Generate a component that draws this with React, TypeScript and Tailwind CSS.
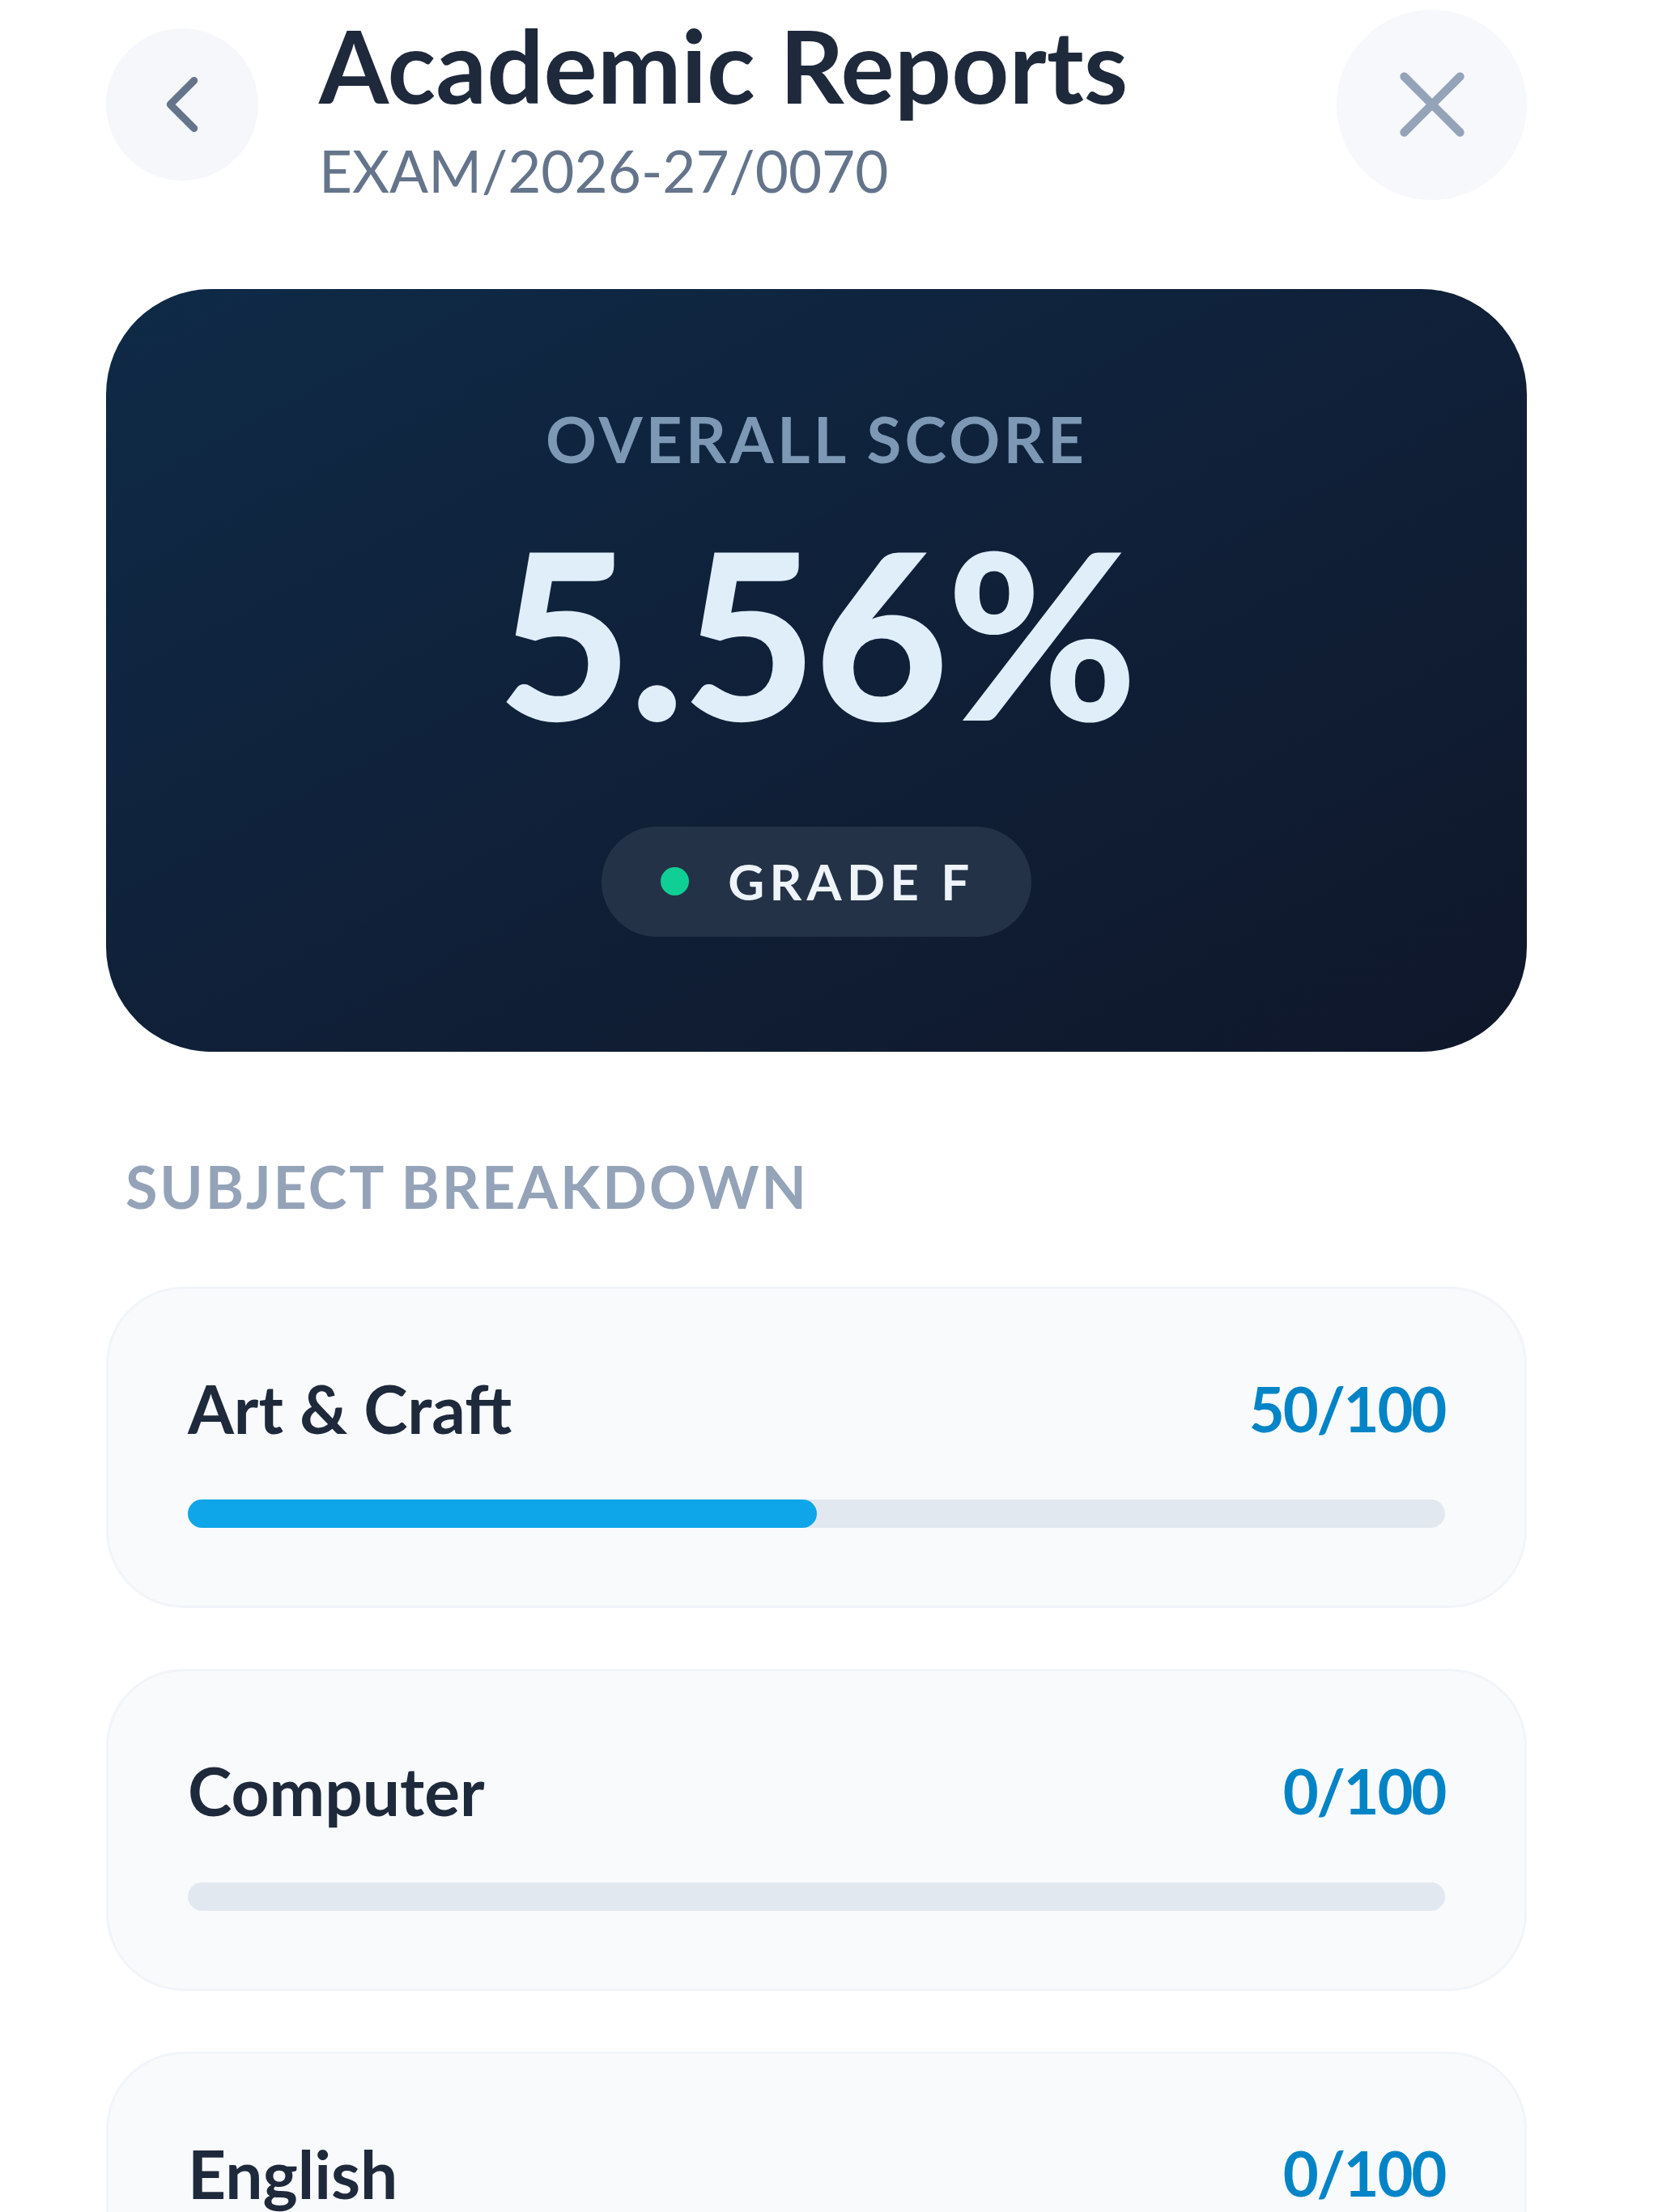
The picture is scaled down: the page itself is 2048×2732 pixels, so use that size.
import { ChevronLeft, X } from "lucide-react";

const subjects = [
  { name: "Art & Craft", score: 50, total: 100 },
  { name: "Computer", score: 0, total: 100 },
  { name: "English", score: 0, total: 100 },
];

function SubjectCard({ name, score, total }: { name: string; score: number; total: number }) {
  return (
    <div className="rounded-[96px] border-[3px] border-[#f1f5f9] bg-[#f8fafc] px-[98px] pt-[98px] pb-[96px]">
      <div className="flex items-center justify-between">
        <h3 className="text-[82px] leading-[1.2] font-bold text-[#1e293b]">{name}</h3>
        <span className="text-[76px] leading-[1.2] font-bold tracking-[-0.03em] text-[#0284c7]">
          {score}/{total}
        </span>
      </div>
      <div className="mt-[64px] h-[35px] w-full rounded-full bg-[#e2e8f0]">
        <div
          className="h-full rounded-full bg-[#0ea5e9]"
          style={{ width: `${(score / total) * 100}%` }}
        />
      </div>
    </div>
  );
}

export default function App() {
  return (
    <div className="min-h-screen bg-white font-['Lato',sans-serif] pl-[131px] pr-[162px] pt-[6px]">
      {/* header */}
      <div className="flex items-center">
        <button className="flex size-[188px] shrink-0 items-center justify-center rounded-full bg-[#f5f7fa]">
          <ChevronLeft size={118} strokeWidth={1.8} className="text-[#64748b]" />
        </button>
        <div className="ml-[75px] flex-1">
          <h1 className="text-[124px] leading-[1.2] font-bold text-[#1e293b]">Academic Reports</h1>
          <p className="mt-[13px] text-[71px] leading-[1.2] text-[#64748b]">EXAM/2026-27/0070</p>
        </div>
        <button className="flex size-[235px] shrink-0 items-center justify-center rounded-full bg-[#f6f8fb]">
          <X size={138} strokeWidth={1.8} className="text-[#94a3b8]" />
        </button>
      </div>

      {/* overall score */}
      <div className="mt-[104px] flex flex-col items-center rounded-[130px] bg-gradient-to-br from-[#0e2a47] to-[#0f172a] pt-[146px] pb-[142px]">
        <p className="text-[78px] leading-none font-bold tracking-[0.055em] text-[#7d98b5]">
          OVERALL SCORE
        </p>
        <p className="mt-[56px] text-[286px] leading-none font-black tracking-[-0.01em] text-[#e0eefa]">
          5.56%
        </p>
        <div className="mt-[98px] flex h-[136px] items-center gap-[48px] rounded-full bg-[#243247] pl-[73px] pr-[70px]">
          <span className="size-[35px] rounded-full bg-[#10cf94]" />
          <span className="text-[62px] font-bold tracking-[0.1em] text-[#eef4fa]">GRADE F</span>
        </div>
      </div>

      {/* subject breakdown */}
      <h2 className="mt-[130px] pl-[24px] text-[72px] leading-none font-bold tracking-[0.04em] text-[#94a3b8]">
        SUBJECT BREAKDOWN
      </h2>
      <div className="mt-[88px] flex flex-col gap-[75px] pb-[100px]">
        {subjects.map((s) => (
          <SubjectCard key={s.name} {...s} />
        ))}
      </div>
    </div>
  );
}
